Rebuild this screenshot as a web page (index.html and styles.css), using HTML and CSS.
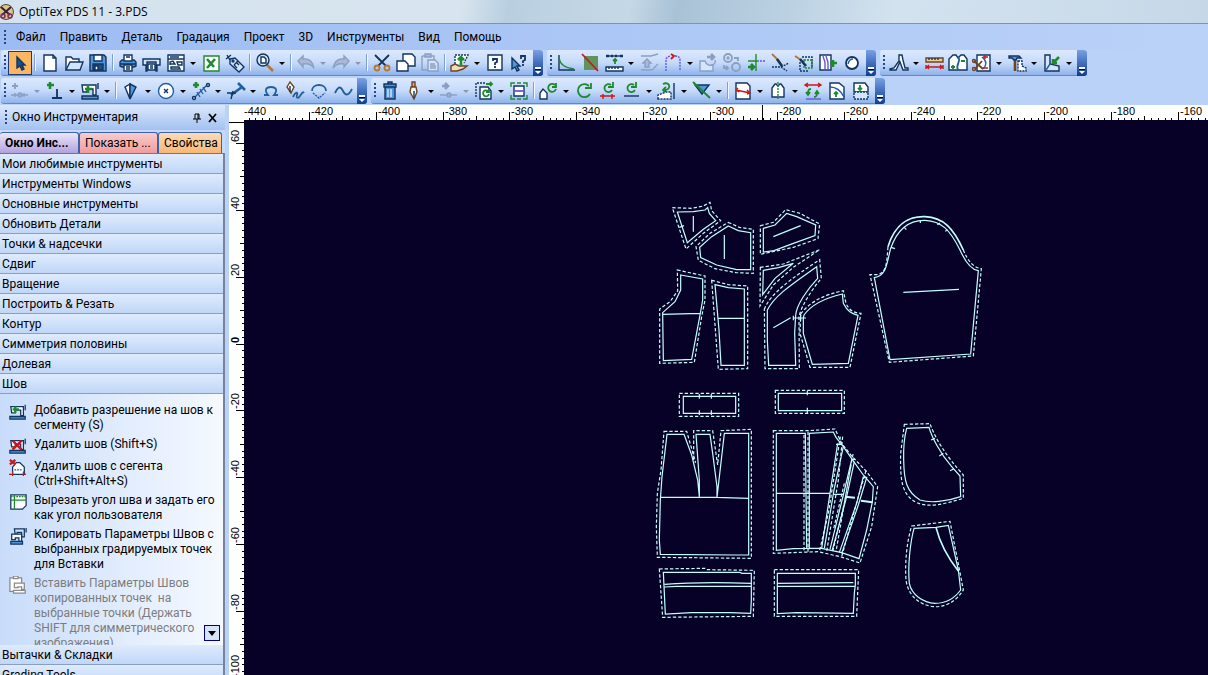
FILE: index.html
```html
<!DOCTYPE html>
<html lang="ru">
<head>
    <meta charset="UTF-8">
    <meta name="viewport" content="width=device-width, initial-scale=1.0">
    <title>OptiTex PDS 11 - 3.PDS</title>
    <link rel="stylesheet" href="styles.css">
</head>
<body>
    <header class="titlebar">
        <svg class="app-icon" viewBox="0 0 15 16"><circle cx="6" cy="8" r="7.500" fill="#d9c48a" stroke="#5a4632"/><path d="M1 3l9 8M11 3l-9 8" stroke="#3a2030" stroke-width="2"/><circle cx="3" cy="12" r="2" stroke="#7a2a70" stroke-width="1.500"/><circle cx="10" cy="12" r="2" stroke="#7a2a70" stroke-width="1.500"/></svg>
        <span>OptiTex PDS 11 - 3.PDS</span>
    </header>

    <nav class="menubar">
        <span class="grip"></span>
        <button>Файл</button>
        <button>Править</button>
        <button>Деталь</button>
        <button>Градация</button>
        <button>Проект</button>
        <button>3D</button>
        <button>Инструменты</button>
        <button>Вид</button>
        <button>Помощь</button>
    </nav>

    <div class="toolbars">
        <div class="toolbar-row">
            <div class="toolbar">
                <span class="grip"></span>
                <button class="tool active" aria-label="Select"><svg viewBox="0 0 20 20"><path class="fn" d="M7 4v11l3-2 2 4 2-1-2-4h3z"/></svg></button>
                <i class="sep"></i>
                <button class="tool" aria-label="New"><svg viewBox="0 0 20 20"><path class="fw" d="M4 2h9l3 3v13H4z"/><path d="M13 2v3h3"/></svg></button>
                <button class="tool" aria-label="Open"><svg viewBox="0 0 20 20"><path class="fw" d="M2 17V4h5l2 2h6v3"/><path class="fl" d="M2 17l4-8h13l-3 8z"/></svg></button>
                <button class="tool" aria-label="Save"><svg viewBox="0 0 20 20"><path class="fb" d="M2 2h14l2 2v14H2z"/><path class="fw" d="M6 2h8v6H6z"/><path class="fd" d="M5 11h10v6H5z"/><path class="fw" d="M7 13h3v4H7z"/></svg></button>
                <i class="sep"></i>
                <button class="tool" aria-label="Print"><svg viewBox="0 0 20 20"><path class="fb" d="M2 9l2-2h12l2 2v4l-2 1H4l-2-1z"/><path class="fw" d="M6 2h8v6H6zM6 12h8v6H6z"/><path d="M8 4h4M8 14h4M8 16h4M2 11h16"/></svg></button>
                <button class="tool" aria-label="Plot"><svg viewBox="0 0 20 20"><path class="fl" d="M1 6h17v6h-3v6h-1V9H5v9H4v-6H1z"/><path class="fw" d="M6 11h7v6H6z"/><path d="M8 13h3M8 15h3"/></svg></button>
                <button class="tool" aria-label="Layout"><svg viewBox="0 0 20 20"><path class="fw" d="M2 2h16v4H2zM2 6h16v12H2z"/><path d="M4 4h9M4 12V9l3-1 2 3h-5zM11 9h5v3h-4zM5 14h8l1 2H5z"/></svg></button>
                <button class="drop" aria-label="Layout menu"></button>
                <button class="tool" aria-label="Excel"><svg viewBox="0 0 20 20"><path class="fw g" d="M3 3h15v15H3z"/><path d="M6 6l7 8M14 6l-8 9" class="g w3"/></svg></button>
                <button class="tool" aria-label="Tag"><svg viewBox="0 0 20 20"><path class="fl" d="M5 6l5-1 9 9-5 5-9-8z"/><circle cx="8" cy="8" r="1"/><path d="M2 2l3 5M1 6l5-4M11 9l3 3M9 12l3 3M13 8l-4 4"/></svg></button>
                <i class="sep"></i>
                <button class="tool" aria-label="Zoom"><svg viewBox="0 0 20 20"><path class="amber w3" d="M12 12l6 6"/><circle class="fl" cx="8" cy="7" r="6"/><path d="M6 4h3l2 2v4H6z" class="fw"/></svg></button>
                <button class="drop" aria-label="Zoom menu"></button>
                <i class="sep"></i>
                <button class="tool" aria-label="Undo" disabled><svg viewBox="0 0 20 20"><path class="fs" d="M2 8l5-5v3c6-1 10 3 11 9-3-4-6-5-11-4v3z"/></svg></button>
                <button class="drop off" aria-label="Undo menu" disabled></button>
                <button class="tool" aria-label="Redo" disabled><svg viewBox="0 0 20 20"><path class="fs" d="M18 8l-5-5v3C7 5 3 9 2 15c3-4 6-5 11-4v3z"/></svg></button>
                <button class="drop off" aria-label="Redo menu" disabled></button>
                <i class="sep"></i>
                <button class="tool" aria-label="Cut"><svg viewBox="0 0 20 20"><path d="M3 2l11 11M17 2L6 13" class="w2"/><circle class="amber w2" cx="5" cy="15" r="2.500"/><circle class="amber w2" cx="15" cy="15" r="2.500"/></svg></button>
                <button class="tool" aria-label="Copy"><svg viewBox="0 0 20 20"><path class="fw" d="M7 1h9l3 3v9H7z"/><path class="fw" d="M1 8h8l3 3v7H1z"/></svg></button>
                <button class="tool" aria-label="Paste" disabled><svg viewBox="0 0 20 20"><path class="s" d="M2 3h12v4M2 3v14h6"/><path class="fs" d="M5 1h6v3H5z"/><path class="s fl" d="M8 7h7l3 3v8H8z"/><path class="s" d="M10 11h5M10 13h6M10 15h6"/></svg></button>
                <i class="sep"></i>
                <button class="tool" aria-label="Export"><svg viewBox="0 0 20 20"><path class="fw dash" d="M5 11V2h13l-4 8"/><path class="g w3" d="M11 12V4M8 7l3-3 3 3"/><path d="M1 13l4-2 4 2h8l-4 3-6 2H1z" fill="#f5dcb4" class="o"/></svg></button>
                <button class="drop" aria-label="Export menu"></button>
                <button class="tool" aria-label="Help"><svg viewBox="0 0 20 20"><path class="fw" d="M3 2h14v15H3z"/><path class="w2" d="M8 8V6h4v3l-2 1v2M10 13v2"/></svg></button>
                <button class="tool" aria-label="Context help"><svg viewBox="0 0 20 20"><path class="fb" d="M3 5v11l3-2 2 4 2-1-2-4h3z"/><path class="w2" d="M12 6V3h4v4l-2 1v2M14 11v2"/></svg></button>
                <button class="more" aria-label="More"></button>
            </div>

            <div class="toolbar">
                <span class="grip"></span>
                <button class="tool" aria-label="Curve"><svg viewBox="0 0 20 20"><path d="M3 2v15h16"/><path class="g" d="M3 5c1 6 5 10 15 11"/></svg></button>
                <button class="tool" aria-label="Fill"><svg viewBox="0 0 20 20"><path d="M4 3h14v14H4z" fill="#5d9560" stroke="none"/><path class="r w2" d="M2 1l16 17"/></svg></button>
                <button class="tool" aria-label="Compare"><svg viewBox="0 0 20 20"><path d="M2 3h17"/><path class="w3" d="M2 3h3M7 3h2M11 3h2M16 3h3"/><path class="g w2" d="M11 11V6M9 8l2-2 2 2"/><path class="fw" d="M2 14h17v4H2z"/><path d="M5 14v2M8 14v2M11 14v2M14 14v2"/></svg></button>
                <button class="drop" aria-label="Compare menu"></button>
                <button class="tool" aria-label="Raise" disabled><svg viewBox="0 0 20 20"><path class="s" d="M2 3h10l7-2M2 17h10c3 0 4-4 7-6"/><path class="fs" d="M4 10h2v4h4v-4h2L8 6z"/></svg></button>
                <button class="tool" aria-label="Arc"><svg viewBox="0 0 20 20"><path class="v dash" d="M3 18V6c1-2 3-3 5-3M12 3c3 0 5 1 5 4v11"/><path class="r w2" d="M8 1l3 2-3 3"/></svg></button>
                <button class="drop" aria-label="Arc menu"></button>
                <button class="tool" aria-label="Rotate piece" disabled><svg viewBox="0 0 20 20"><path class="s fl" d="M2 8h5c1 4 5 5 8 4v6H2z"/><path class="s" d="M17 7c1 3-1 5-4 5"/><path class="s w3" d="M9 4h7M13 1l3 3-3 3"/></svg></button>
                <button class="tool" aria-label="Rings" disabled><svg viewBox="0 0 20 20"><circle class="s w2" cx="6" cy="5" r="4"/><circle class="s" cx="6" cy="5" r="1"/><circle class="s w2" cx="14" cy="14" r="4"/><path class="s w2" d="M12 5h4v3M2 12v3h4M4 13l2 2-2 2"/></svg></button>
                <button class="tool" aria-label="Align"><svg viewBox="0 0 20 20"><path class="g" d="M10 1v17M2 8h9"/><path class="dash v" d="M11 8h9"/><path class="g w3" d="M2 14h6M5 11l3 3-3 3"/></svg></button>
                <button class="tool" aria-label="Brush"><svg viewBox="0 0 20 20"><path class="amber w2" d="M2 1l6 6"/><path class="w3" d="M7 6l5 7"/><path class="dash" d="M2 14h9l8-4M11 14l6 4"/></svg></button>
                <button class="tool" aria-label="Brush area"><svg viewBox="0 0 20 20"><path class="dash" d="M8 4h10v10M6 9v9h8"/><path class="g dash" d="M10 7h8v8h-8z"/><path class="amber w2" d="M1 3l6 4"/><path class="w3" d="M6 6l6 7"/></svg></button>
                <button class="tool" aria-label="Pleats"><svg viewBox="0 0 20 20"><path class="fw" d="M2 2h11v15H2z"/><path class="v" d="M5 2c0 4 2 5 2 8v7M8 2c0 4 2 5 2 8v7"/><path class="g w3" d="M12 10h7M15 7v7"/></svg></button>
                <button class="tool" aria-label="Circle"><svg viewBox="0 0 20 20"><circle cx="10" cy="10" r="6" class="fw w2"/><path class="b" d="M6 11c1-4 3-5 5-5"/></svg></button>
                <button class="more" aria-label="More"></button>
            </div>

            <div class="toolbar">
                <span class="grip"></span>
                <button class="tool" aria-label="Walk"><svg viewBox="0 0 20 20"><path class="fw" d="M1 16l4-1 5-7V2h3l1 5 2 8h3v2h-5l-3-8-4 8H1z"/></svg></button>
                <button class="drop" aria-label="Walk menu"></button>
                <button class="tool" aria-label="Measure"><svg viewBox="0 0 20 20"><path class="o" fill="#f2cf90" d="M2 5h17v4H2z"/><path d="M5 5v2M8 5v2M11 5v2M14 5v2"/><path class="r" d="M2 14h17M2 12v4M19 12v4M5 12l-2 2 2 2M16 12l2 2-2 2"/></svg></button>
                <button class="tool" aria-label="Join"><svg viewBox="0 0 20 20"><path class="fw" d="M1 17V6l4-4h3l2 3 3-3h3l3 4v11z"/><path class="b w2" d="M10 4c4 4-3 7 0 13"/><path class="g w2" d="M3 14h4M5 12v4M13 8h4"/></svg></button>
                <button class="tool" aria-label="Cut piece"><svg viewBox="0 0 20 20"><path class="fw" d="M5 2h13v16H5z"/><path class="b" d="M10 4c5 4 5 8 1 12"/><path class="r" d="M11 4h5M13 2v4M11 15h5"/><path class="o w2" d="M2 8l9 8M10 8l-7 8"/><circle class="o" cx="2" cy="8" r="1.500"/><circle class="o" cx="2" cy="16" r="1.500"/></svg></button>
                <button class="drop" aria-label="Cut menu"></button>
                <button class="tool" aria-label="Build"><svg viewBox="0 0 20 20"><path class="o w3" d="M8 5v13"/><path class="fb" d="M2 3h10l2 2h-4l-1 2H7L5 5H2z"/><path class="fw dash" d="M11 8h4v5l4 2v3h-8z"/></svg></button>
                <button class="drop" aria-label="Build menu"></button>
                <button class="tool" aria-label="Angle"><svg viewBox="0 0 20 20"><path class="fl" d="M3 2h5v9l9 2v5H3z"/><path class="b" d="M8 11L4 17"/><path class="g w3" d="M17 4l-6 6M11 6v4h4"/></svg></button>
                <button class="drop" aria-label="Angle menu"></button>
                <button class="more" aria-label="More"></button>
            </div>
        </div>

        <div class="toolbar-row">
            <div class="toolbar">
                <span class="grip"></span>
                <button class="tool" aria-label="Add point" disabled><svg viewBox="0 0 20 20"><path class="s w2" d="M5 2v6M2 5h6"/><path class="s" d="M1 14h17M5 12v4M14 12v4"/><circle class="s" cx="10" cy="14" r="2"/></svg></button>
                <button class="drop off" aria-label="Point menu" disabled></button>
                <button class="tool" aria-label="Add notch"><svg viewBox="0 0 20 20"><path class="g w3" d="M5 1v7M2 4h7"/><path class="w2" d="M7 17h10M12 17V8"/></svg></button>
                <button class="drop" aria-label="Notch menu"></button>
                <button class="tool" aria-label="Add seam"><svg viewBox="0 0 20 20"><path class="fw" d="M2 4h14v10h-3V8H7v3H3z"/><path d="M18 2v6"/><path class="fb" d="M2 15h16v3H2z"/><path class="g w3" d="M8 5v7M5 8h7"/></svg></button>
                <button class="drop" aria-label="Seam menu"></button>
                <i class="sep"></i>
                <button class="tool" aria-label="Dart"><svg viewBox="0 0 20 20"><path class="fw" d="M9 3L4 6l5 12z"/><path class="fb" d="M9 3l6 3-6 12z"/></svg></button>
                <button class="drop" aria-label="Dart menu"></button>
                <button class="tool" aria-label="Button"><svg viewBox="0 0 20 20"><circle class="fw b" cx="10" cy="10" r="7.500"/><path d="M8 8l4 4M12 8l-4 4"/></svg></button>
                <button class="drop" aria-label="Button menu"></button>
                <button class="tool" aria-label="Grade points"><svg viewBox="0 0 20 20"><path class="g w3" d="M5 1v6M2 4h6"/><path class="b" d="M3 17L17 3M6 11l3 5M9 8l3 5M12 6l3 5"/><circle class="fl" cx="3" cy="17" r="1.500"/><circle class="fl" cx="17" cy="4" r="1.500"/></svg></button>
                <button class="drop" aria-label="Grade menu"></button>
                <button class="tool" aria-label="Stitch"><svg viewBox="0 0 20 20"><path class="b w3" d="M5 14L16 6M12 2l7 7"/><path d="M1 12h9M5 18l2-8"/></svg></button>
                <button class="drop" aria-label="Stitch menu"></button>
                <button class="tool" aria-label="Loop"><svg viewBox="0 0 20 20"><path class="b w2" d="M3 14h4C3 9 5 6 10 6s7 3 3 8h4"/></svg></button>
                <button class="tool" aria-label="Pen curve"><svg viewBox="0 0 20 20"><path class="o fw" d="M5 1l-3 5 4 6 3-6z"/><path d="M5 5v6"/><path class="b w2" d="M8 16c3-6 5-5 4-2s1 4 3 1 3-5 4-3"/></svg></button>
                <button class="tool" aria-label="Arc points"><svg viewBox="0 0 20 20"><path class="b w2" d="M3 10c0-8 14-8 14 0"/><path class="dash b" d="M4 12l6 5 6-5"/></svg></button>
                <button class="tool" aria-label="Wave"><svg viewBox="0 0 20 20"><path class="b w2" d="M2 12c4-8 6-6 8-2s5 6 9-2"/></svg></button>
                <button class="more" aria-label="More"></button>
            </div>

            <div class="toolbar">
                <span class="grip"></span>
                <button class="tool" aria-label="Delete"><svg viewBox="0 0 20 20"><path class="fb" d="M5 6h10v12H5zM4 3h12v3H4zM8 1h4v2H8z"/><path class="pale" d="M8 8v8M11 8v8"/></svg></button>
                <button class="tool" aria-label="Pen"><svg viewBox="0 0 20 20"><path fill="#f2a35a" class="o" d="M8 1h3v5H8z"/><path class="o fw" d="M7 6h5l1 5-3 7-4-7z"/><path d="M10 10v7"/></svg></button>
                <button class="drop" aria-label="Pen menu"></button>
                <button class="tool" aria-label="Move point" disabled><svg viewBox="0 0 20 20"><path class="s w3" d="M3 5h6M6 2l3 3-3 3"/><path class="s" d="M1 14h17"/><circle class="s" cx="10" cy="14" r="2"/></svg></button>
                <button class="drop off" aria-label="Move menu" disabled></button>
                <button class="tool" aria-label="Rotate pieces"><svg viewBox="0 0 20 20"><path class="dash" d="M2 16V2h9"/><path class="fw" d="M6 6h8l3 4v8H6z"/><path class="g w2" d="M14 10a3 3 0 1 0 1 3M15 8v3h-3"/><path class="g w2" d="M12 3h6M16 1l2 2-2 2"/></svg></button>
                <button class="drop" aria-label="Rotate menu"></button>
                <button class="tool" aria-label="Frame"><svg viewBox="0 0 20 20"><path class="g" d="M2 6V2h4M14 2h4v4M2 14v4h4M14 18h4v-4M8 2h4M8 18h4"/><path class="fw" d="M5 5h10v10H5z"/><path class="v w2" d="M5 10h10"/></svg></button>
                <i class="sep"></i>
                <button class="tool" aria-label="Turn left"><svg viewBox="0 0 20 20"><path class="fw" d="M1 18v-6l3-4 4 4v6z"/><path class="g w2" d="M16 4a4 4 0 1 0 1 4M17 2v4h-4"/></svg></button>
                <button class="drop" aria-label="Turn menu"></button>
                <button class="tool" aria-label="Rotate"><svg viewBox="0 0 20 20"><path class="g w2" d="M15 5a6.500 6.500 0 1 0 1 8M17 2v5h-6"/></svg></button>
                <button class="tool" aria-label="Rotate to axis"><svg viewBox="0 0 20 20"><path class="g w2" d="M13 4a4 4 0 1 0 1 5M15 1v5h-5"/><path class="r" d="M2 15h15M5 13v5M14 13v5"/></svg></button>
                <button class="tool" aria-label="Rotate to line"><svg viewBox="0 0 20 20"><path class="g w2" d="M12 4a4 4 0 1 0 1 5M14 1v5H9"/><path d="M2 15h15"/></svg></button>
                <button class="drop" aria-label="Line menu"></button>
                <button class="tool" aria-label="Flip"><svg viewBox="0 0 20 20"><path class="g w2" d="M6 3c6-3 9 4 3 6H6M9 6L6 9l3 3"/><path class="fw dash" d="M1 18v-4l8-3h5v7z"/><path d="M17 2v16"/></svg></button>
                <button class="drop" aria-label="Flip menu"></button>
                <button class="tool" aria-label="Mirror"><svg viewBox="0 0 20 20"><path class="fb" d="M3 4h14l-7 9z"/><path class="g w2" d="M1 1l17 16"/></svg></button>
                <button class="drop" aria-label="Mirror menu"></button>
                <i class="sep"></i>
                <button class="tool" aria-label="Piece length"><svg viewBox="0 0 20 20"><path class="fw" d="M3 2h11l3 3v13H3z"/><path class="r" d="M3 9l14 3M5 7L3 9l3 2M14 9l3 3-3 1"/></svg></button>
                <button class="drop" aria-label="Length menu"></button>
                <button class="tool" aria-label="Half"><svg viewBox="0 0 20 20"><path class="fw" d="M4 16V7l3-4h1l2 2 2-2h1l3 4v9z"/><path class="g dash" d="M10 1v18"/></svg></button>
                <button class="drop" aria-label="Half menu"></button>
                <button class="tool" aria-label="Swap"><svg viewBox="0 0 20 20"><path class="r" d="M2 4h16M5 2L2 4l3 2M15 2l3 2-3 2"/><path class="g w2" d="M8 8c-3 0-3 2-3 6M3 11l2 3 2-3M11 16c3 0 3-2 3-6M12 13l2-3 2 3"/><path class="v" d="M3 18h15"/></svg></button>
                <button class="tool" aria-label="Shape up"><svg viewBox="0 0 20 20"><path class="fw" d="M3 18V2h9l5 4v12z"/><path class="b" d="M3 6c7 0 11 4 14 10"/><path class="g w2" d="M9 16v-5M7 13l2-2 2 2"/></svg></button>
                <button class="tool" aria-label="Shape down"><svg viewBox="0 0 20 20"><path class="fw" d="M3 11V2h11l3 4v5z"/><path class="fl dash" d="M3 11h14v7H3z"/><path class="g w2" d="M9 4v5M7 7l2 2 2-2"/></svg></button>
                <button class="more" aria-label="More"></button>
            </div>
        </div>
    </div>

    <main class="workspace">
        <aside class="panel">
            <div class="panel-head">
                <span class="grip"></span>
                <h1>Окно Инструментария</h1>
                <button aria-label="Pin"><svg viewBox="0 0 10 10"><path d="M3 1h4v5M3 1v5M1 6h8M5 6v4M6 1v5"/></svg></button>
                <button aria-label="Close"><svg viewBox="0 0 10 10"><path class="w2" d="M1 1l7 8M8 1L1 9"/></svg></button>
            </div>
            <div class="tabs">
                <button class="tab tools">Окно Инс...</button>
                <button class="tab show">Показать ...</button>
                <button class="tab props">Свойства</button>
            </div>
            <div class="groups">
                <button class="group">Мои любимые инструменты</button>
                <button class="group">Инструменты Windows</button>
                <button class="group">Основные инструменты</button>
                <button class="group">Обновить Детали</button>
                <button class="group">Точки &amp; надсечки</button>
                <button class="group">Сдвиг</button>
                <button class="group">Вращение</button>
                <button class="group">Построить &amp; Резать</button>
                <button class="group">Контур</button>
                <button class="group">Симметрия половины</button>
                <button class="group">Долевая</button>
                <button class="group">Шов</button>
                <div class="commands">
                    <button class="command">
                        <svg viewBox="0 0 20 20"><path class="fw" d="M2 4h14v10h-3V8H7v3H3z"/><path d="M18 2v6"/><path class="fb" d="M1 15h17v3H1z"/><path class="g w3" d="M7 4v7M4 7h7"/></svg>
                        <span>Добавить разрешение на шов к<br>сегменту (S)</span>
                    </button>
                    <button class="command">
                        <svg viewBox="0 0 20 20"><path class="fw" d="M2 4h14v10h-3V8H7v3H3z"/><path d="M18 2v6"/><path class="fb" d="M1 15h17v3H1z"/><path class="r w3" d="M4 4l10 10M14 4L4 14"/></svg>
                        <span>Удалить шов (Shift+S)</span>
                    </button>
                    <button class="command">
                        <svg viewBox="0 0 20 20"><path class="fw" d="M4 17V9l4-5h4l5 5v8z"/><path class="b dash" d="M6 12h9"/><path class="r" d="M0 17h4M16 17h3M4 14v5M16 14v5"/><path class="r w3" d="M1 1l6 5M7 1L1 6"/></svg>
                        <span>Удалить шов с сегента<br>(Ctrl+Shift+Alt+S)</span>
                    </button>
                    <button class="command">
                        <svg viewBox="0 0 20 20"><path class="fw" d="M2 2h17v12l-4 4H2z"/><path class="g dash" d="M2 4h17"/><path class="g" d="M6 2v16M2 8h17"/></svg>
                        <span>Вырезать угол шва и задать его<br>как угол пользователя</span>
                    </button>
                    <button class="command">
                        <svg viewBox="0 0 20 20"><path class="fl" d="M6 2h11v9h-3V6H9v3H7z"/><path d="M19 1v5"/><path class="fw" d="M3 8h11v8h-3v-4H7v2H3z"/><path class="fb" d="M2 16h13v3H2z"/></svg>
                        <span>Копировать Параметры Швов с<br>выбранных градируемых точек<br>для Вставки</span>
                    </button>
                    <button class="command" disabled>
                        <svg viewBox="0 0 20 20" class="gray"><path class="fw" d="M1 2h13v15H1z"/><path class="fw" d="M5 0h5v3H5zM6 8h11v7h-3v-3h-4v1H6zM5 16h13v3H5z"/></svg>
                        <span>Вставить Параметры Швов<br>копированных точек&nbsp; на<br>выбранные точки (Держать<br>SHIFT для симметрического<br>изображения)</span>
                    </button>
                    <button class="scroll-down" aria-label="Scroll down"></button>
                </div>
                <div class="groups-tail">
                    <button class="group">Вытачки &amp; Складки</button>
                    <button class="group">Grading Tools</button>
                </div>
            </div>
        </aside>

        <section class="sheet">
            <svg class="ruler-top" id="rulerTop"></svg>
            <svg class="ruler-left" id="rulerLeft"></svg>
            <svg class="canvas">
                <!-- bodice -->
                <g transform="translate(406 70) scale(.33333)">
                    <path d="M82 66L130 65 165 60 173 53 178 70 197 92 160 118 112 158Z"/>
                    <path class="cut" d="M67 53L125 55 160 48 180 37 185 62 212 92 160 130 108 177Z"/>
                    <path d="M130 78V125M88 112l14-5"/>
                    <path d="M235 108L265 122 302 128V239H260L200 225 152 203 149 172 185 140Z"/>
                    <path class="cut" d="M235 97L268 112 310 118V250L258 248 195 236 145 211 138 170 180 130Z"/>
                    <path d="M223 135V207"/>
                    <path d="M340 115L375 105 410 70 440 80 497 105 495 137 430 160 372 182 340 186Z"/>
                    <path class="cut" d="M331 107L370 97 407 59 450 70 509 102 504 146 430 172 331 193Z"/>
                    <path d="M370 140L452 107"/>
                    <path d="M340 241L385 233 430 220 375 265 338 314Z"/>
                    <path class="cut" d="M331 232L400 222 509 179 430 232 370 285 330 348Z"/>
                    <path d="M92 255L158 267V330L150 375 125 508 40 512 38 368 75 335 92 300ZM38 373L150 370"/>
                    <path class="cut" d="M82 240L165 258V330L155 380 133 517 29 520V357L60 335 83 303Z"/>
                    <path d="M195 284L235 293 283 297V526H213L207 420ZM205 385H283"/>
                    <path class="cut" d="M185 271L235 284 293 288V536L205 538Z"/>
                    <path d="M352 360C375 315 430 280 500 230L503 265C470 300 440 345 437 375L434 430 437 526H356L352 450Z"/>
                    <path class="cut" d="M343 358C360 310 430 262 509 209L514 265C485 300 455 345 447 380L448 536H345Z"/>
                    <path d="M370 413L422 383M430 377v14M430 384h38M452 375v18"/>
                </g>
                <!-- side front and sleeve -->
                <g transform="translate(516 70) scale(.33333)">
                    <path d="M132 375C150 350 190 325 247 312L250 340C262 365 275 370 294 376L265 520 157 523 130 430V385Z"/>
                    <path class="cut" d="M122 372C150 335 190 315 250 302L258 340C268 362 280 368 303 370L270 532H150L120 430Z"/>
                    <path d="M343 263C380 258 380 220 392 175 415 110 455 90 495 91 545 93 570 120 600 180 620 225 640 240 655 242L632 492 390 509Z"/>
                    <path class="cut" d="M384 170C380 220 380 250 350 254H330L388 517 640 498 664 236C640 232 625 215 610 180"/>
                    <path class="seam" d="M384 170C405 100 450 78 495 80 550 82 580 115 610 180"/>
                    <path d="M430 307L597 298M393 172l12 4M481 90v9M532 104l8-5M556 124l6-6M433 112l6 7"/>
                </g>
                <!-- waistbands, skirt and hem -->
                <g transform="translate(406 260) scale(.33333)">
                    <path d="M100 49H257V100H100ZM148 42v14M184 42v14M148 91v14M184 91v14"/>
                    <path class="cut" d="M88 40H266V109H88Z"/>
                    <path d="M385 40H575V92H385ZM472 32v14M472 83v16"/>
                    <path class="cut" d="M376 31H583V100H376Z"/>
                    <path d="M51 163H102L125 225 143 300 148 350V300L138 163H180L188 220 201 320V352L223 160H296V525H255L31 523 28 480 31 360 36 290ZM31 352H200L296 355"/>
                    <path class="cut" d="M42 154H110L137 248 131 240V152H188L203 255 213 152 304 148V535L22 532 19 440 22 340 33 270Z"/>
                    <path d="M379 511V160H466L470 505 430 506ZM478 508V160L550 156 558 172 580 200 605 236 640 285 670 320 667 366 650 450 627 536 575 518 515 505H470M379 340H540M550 343H580"/>
                    <path d="M563 190L540 340 515 505M580 200L552 330 523 505M605 240L580 345 540 508M613 245L590 350 547 510M640 290L620 370 568 517M650 293L625 375 575 520M558 193h16M604 238h12M638 292h14"/>
                    <path class="thick" d="M585 350L615 353M633 362L667 367"/>
                    <path class="cut" d="M370 152H475L555 147 575 190 605 228 650 275 683 320 665 440 630 549 570 530 505 515 370 520Z"/>
                    <path class="cut" d="M462 165V515M474 155V515M571 170L535 400 508 515M578 170L565 300 530 515M609 222L583 370 548 515M602 260L558 515M648 272L625 350 575 530M583 310L550 450"/>
                    <path d="M40 577H270L275 580H304V660L302 700 240 698H125L46 702ZM44 613Q150 605 304 610M44 621L80 619H304"/>
                    <path class="cut" d="M28 567L165 565 170 569 313 571 310 709 38 712Z"/>
                    <path d="M382 580H616V615L613 640 610 700 440 698 382 701ZM382 610L610 608M382 619H616"/>
                    <path class="cut" d="M373 569H626L620 709H373Z"/>
                </g>
                <!-- pockets -->
                <g transform="translate(636 290) scale(.33333)">
                    <path d="M80 55L147 52C155 80 180 130 215 170L240 198 242 260C200 275 150 280 120 270 80 245 72 215 71 150 70 110 73 80 80 55Z"/>
                    <path class="cut" d="M73 43L150 41C165 85 200 140 250 195V265C200 280 150 295 110 278 65 255 60 210 62 130Z"/>
                    <path d="M153 90l12-5M178 138l12-8M210 182l12-6"/>
                    <path d="M102 355L168 352 205 346 235 480 242 540C220 570 190 580 165 580 130 578 95 555 88 520 83 470 90 400 102 355Z"/>
                    <path class="seam" d="M168 352C180 400 205 445 235 483"/>
                    <path class="cut" d="M95 348L210 334 250 540C225 580 190 592 160 590 120 585 85 560 78 510 74 450 82 390 95 348Z"/>
                </g>
            </svg>
        </section>
    </main>

    <script>
        // 20 units = 66.85px, both rulers
        const STEP = 66.85;

        function drawRuler(id, first, start, sign, vertical) {
            const size = vertical ? window.innerHeight : window.innerWidth;
            let out = "";
            for (let i = 0; start + i * STEP < size; i++) {
                for (let t = 0; t < 10; t++) {
                    const pos = Math.round(start + (i + t / 10) * STEP) + 0.5;
                    const len = t === 0 ? 8 : t === 5 ? 4 : 2;
                    if (!vertical && pos < 15) continue;
                    out += vertical
                        ? `<path d="M${15 - len} ${pos}H15"/>`
                        : `<path d="M${pos} ${15 - len}V15"/>`;
                }
                const value = first + sign * 20 * i;
                const at = Math.round(start + i * STEP);
                const cls = value === 0 ? ' class="zero"' : "";
                out += vertical
                    ? `<text${cls} transform="translate(10 ${at - 1}) rotate(-90)">${value}</text>`
                    : `<text x="${at + 2}" y="10">${value}</text>`;
            }
            // cursor position
            out += vertical ? '<path d="M0 2.5H15"/>' : '<path d="M533.5 0V15"/>';
            document.getElementById(id).innerHTML = out;
        }

        drawRuler("rulerTop", -440, 13, 1, false);
        drawRuler("rulerLeft", 60, 23, -1, true);
    </script>
</body>
</html>
```
FILE: styles.css
```css
* {
    box-sizing: border-box;
}
body {
    margin: 0;
    height: 100vh;
    overflow: hidden;
    display: flex;
    flex-direction: column;
    font-family: Roboto, "Open Sans", sans-serif;
    font-size: 12px;
    line-height: 15px;
    color: #000;
    background: #bbd2f8;
}
button {
    font: inherit;
    color: inherit;
    margin: 0;
    padding: 0;
    border: none;
    background: none;
    text-align: left;
    white-space: nowrap;
}

/* title and menu */
.titlebar {
    flex: none;
    display: flex;
    align-items: center;
    gap: 4px;
    height: 24px;
    border-bottom: 1px solid #7c93b5;
    font-family: "Open Sans", "Noto Sans", sans-serif;
    background: linear-gradient(100deg, #d3e2ee 0%, #d8e5ef 38%, #b9cfe0 42%, #c5d8e6 52%, #a9c2d6 56%, #bdd3e4 66%, #d3e2ef 74%, #c6d8e8 100%);
}
.app-icon {
    width: 15px;
    height: 16px;
    fill: none;
}
.menubar {
    flex: none;
    display: flex;
    align-items: center;
    gap: 14px;
    height: 26px;
    padding-left: 1px;
    background: linear-gradient(90deg, #9dbcf3, #bbd2f8);
}
.menubar .grip {
    margin-right: -6px;
}

/* toolbars */
.grip {
    flex: none;
    width: 7px;
    height: 17px;
    background: radial-gradient(circle at 3px 2px, #27468c 1px, transparent 1px) 1px 0 / 6px 4px repeat-y;
}
.toolbars {
    flex: none;
    display: flex;
    flex-direction: column;
    gap: 2px;
    padding: 0 1px 1px;
}
.toolbar-row {
    display: flex;
    gap: 4px;
}
.toolbar {
    display: flex;
    align-items: center;
    height: 26px;
    border-radius: 3px;
    border-bottom: 1px solid #5d88cb;
    background: linear-gradient(#dce9fd, #c6dbfa 50%, #8fb3ec);
}
.tool {
    display: flex;
    align-items: center;
    justify-content: center;
    width: 24px;
    height: 24px;
}
.tool.active {
    border: 1px solid #1c3a7a;
    background: #fcb661;
}
.tool svg,
.command svg {
    flex: none;
    width: 20px;
    height: 20px;
    fill: none;
    stroke: #123460;
    stroke-width: 1.4;
}
.sep {
    width: 2px;
    height: 17px;
    margin: 0 2px;
    border-left: 1px solid #7f9fd4;
    border-right: 1px solid #f1f6ff;
}
.drop {
    width: 11px;
    height: 24px;
}
.drop::before {
    content: "";
    display: block;
    margin: 1px 0 0 2px;
    width: 0;
    border: 3px solid transparent;
    border-top-color: #000;
    border-bottom: none;
}
.drop.off::before {
    border-top-color: #8a97ae;
}
.more {
    display: flex;
    flex-direction: column;
    align-items: center;
    justify-content: flex-end;
    gap: 1px;
    align-self: stretch;
    width: 10px;
    height: 26px;
    margin-left: 2px;
    padding-bottom: 2px;
    border-radius: 0 3px 3px 0;
    background: linear-gradient(#78a2e4, #416fbe 50%, #103c8c);
}
.more::before {
    content: "";
    width: 6px;
    height: 2px;
    background: #fff;
    border-bottom: 1px solid #000;
}
.more::after {
    content: "";
    border: 3px solid transparent;
    border-top-color: #fff;
    border-bottom: none;
}

/* icon paint */
.fw { fill: #fff; }
.fl { fill: #d3e5fb; }
.fb { fill: #4f97da; }
.fd { fill: #1d4e88; }
.fn { fill: #1c5089; }
.fs { fill: #a9b9d6; stroke: #8c9fc2; }
.s { stroke: #8c9fc2; }
.b { stroke: #215f9f; }
.g { stroke: #1d8a2e; }
.r { stroke: #cb1717; }
.o { stroke: #6b4524; }
.v { stroke: #6a55dd; }
.amber { stroke: #b8752c; }
.pale { stroke: #d5e8ff; }
.w2 { stroke-width: 1.8; }
.w3 { stroke-width: 2.6; }
.dash { stroke-dasharray: 2 1; }

/* left panel */
.workspace {
    flex: 1;
    min-height: 0;
    display: flex;
    gap: 4px;
}
.panel {
    flex: none;
    display: flex;
    flex-direction: column;
    width: 225px;
}
.panel-head {
    flex: none;
    display: flex;
    align-items: center;
    height: 25px;
    padding: 0 4px 0 2px;
    background: linear-gradient(#dbe8fc, #a3c1f1);
}
.panel-head h1 {
    flex: 1;
    margin: 0 0 0 3px;
    font-size: 12px;
    font-weight: normal;
}
.panel-head button {
    width: 16px;
    height: 16px;
}
.panel-head svg {
    display: block;
    width: 10px;
    height: 10px;
    margin: auto;
    fill: none;
    stroke: #000;
}
.tabs {
    flex: none;
    display: grid;
    grid-template-columns: 79px 79px 64px;
    height: 23px;
    padding-top: 2px;
    background: #c4d9fb;
}
.tab {
    padding: 0 5px;
    overflow: hidden;
    border: 1px solid #3c62ae;
    border-bottom: none;
    border-radius: 3px 3px 0 0;
}
.tab.tools {
    font-weight: bold;
    background: linear-gradient(#ece6f8, #b2a2dc);
    border-left: none;
}
.tab.show { background: linear-gradient(#f9cbcb, #ef9d9d); }
.tab.props { background: linear-gradient(#fcdcb4, #f8b777); }
.groups {
    flex: 1;
    min-height: 0;
    display: flex;
    flex-direction: column;
    border-top: 1px solid #7a6bb0;
    border-right: 2px solid #75849d;
    background: #cfe0fb;
}
.group {
    flex: none;
    display: block;
    width: 100%;
    height: 20px;
    padding: 2px 2px 0;
    border-bottom: 1px solid #879fc3;
    background: linear-gradient(#dfebfd, #c0d7f8);
}
.commands {
    position: relative;
    flex: 1;
    min-height: 0;
    display: flex;
    flex-direction: column;
    gap: 4px;
    padding: 9px 0 0 8px;
    overflow: hidden;
    background: linear-gradient(90deg, #c8dcfa, #f5f9ff);
}
.command {
    flex: none;
    display: flex;
    align-items: flex-start;
    gap: 6px;
    min-height: 18px;
}
.command:disabled {
    color: #7d7d7d;
}
.command .gray {
    stroke: #8a8a8a;
}
.command svg {
    height: 18px;
}
.scroll-down {
    position: absolute;
    right: 3px;
    bottom: 4px;
    width: 16px;
    height: 16px;
    border: 1px solid #000080;
    background: #d6e4fa;
}
.scroll-down::before {
    content: "";
    display: block;
    width: 0;
    margin: 0 auto;
    border: 4px solid transparent;
    border-top: 5px solid #000;
    border-bottom: none;
}
.groups-tail {
    flex: none;
    height: 30px;
    overflow: hidden;
}

/* drawing sheet */
.sheet {
    flex: 1;
    min-width: 0;
    display: grid;
    grid-template-columns: 15px 1fr;
    grid-template-rows: 15px 1fr;
    background: #fff;
}
.ruler-top {
    grid-column: 1 / 3;
    width: 100%;
    height: 15px;
}
.ruler-left {
    width: 15px;
    height: 100%;
}
.ruler-top,
.ruler-left {
    stroke: #000;
    overflow: hidden;
    font-family: "Liberation Sans", Arial, sans-serif;
    font-size: 11px;
}
.ruler-top text,
.ruler-left text {
    stroke: none;
}
.zero {
    font-weight: bold;
}
.canvas {
    width: 100%;
    height: 100%;
    background: #070027;
    fill: none;
    stroke: #c4ffff;
    stroke-width: 3.6;
}
.canvas .cut {
    stroke-dasharray: 10 6;
}
.canvas .seam {
    stroke-width: 5;
}
.canvas .thick {
    stroke-width: 6;
}
```
